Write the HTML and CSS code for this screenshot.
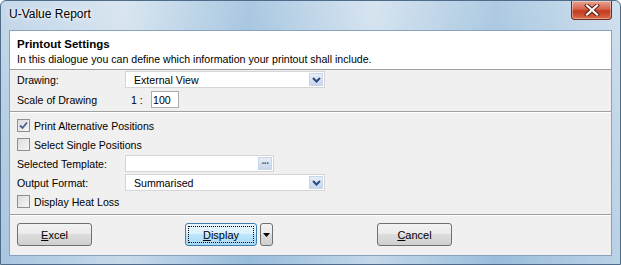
FILE: index.html
```html
<!doctype html><html lang="en">
<head><meta charset="utf-8"/><title>U-Value Report</title>
<meta name="viewport" content="width=device-width, initial-scale=1">
<link rel="stylesheet" href="styles.css">
</head>
<body>

<div class="window">
	<div class="titlebar">
		<span class="title">U-Value Report</span>
		<div class="close">
			<svg width="16" height="12" viewBox="0 0 16 12"><path d="M3 1.5 L13 10.5 M13 1.5 L3 10.5" stroke="#5a1a14" stroke-width="4" stroke-linecap="square"/><path d="M3 1.5 L13 10.5 M13 1.5 L3 10.5" stroke="#fff" stroke-width="2.2" stroke-linecap="square"/></svg>
		</div>
	</div>

	<div class="client">
		<div class="header">
			<div class="h_title">Printout Settings</div>
			<div class="h_sub">In this dialogue you can define which information your printout shall include.</div>
		</div>

		<div class="section top">
			<div class="row">
				<label class="lbl">Drawing:</label>
				<div class="combo"><span>External View</span><span class="drop"><svg width="9" height="6" viewBox="0 0 9 6"><path d="M1 1 L4.5 4.5 L8 1" fill="none" stroke="#2b4a7a" stroke-width="2"/></svg></span></div>
			</div>
			<div class="row">
				<label class="lbl scale">Scale of Drawing</label>
				<span class="ratio">1 :</span>
				<input class="num" type="text" value="100"/>
			</div>
		</div>

		<div class="section mid">
			<label class="chk"><span class="box checked"><svg width="9" height="9" viewBox="0 0 9 9"><path d="M1 4.5 L3.5 7 L8 1.5" fill="none" stroke="#4a5f8c" stroke-width="1.8"/></svg></span>Print Alternative Positions</label>
			<label class="chk"><span class="box"></span>Select Single Positions</label>
			<div class="row">
				<label class="lbl">Selected Template:</label>
				<div class="combo tpl"><span></span><span class="drop dots">&middot;&middot;&middot;</span></div>
			</div>
			<div class="row">
				<label class="lbl">Output Format:</label>
				<div class="combo"><span>Summarised</span><span class="drop"><svg width="9" height="6" viewBox="0 0 9 6"><path d="M1 1 L4.5 4.5 L8 1" fill="none" stroke="#2b4a7a" stroke-width="2"/></svg></span></div>
			</div>
			<label class="chk"><span class="box"></span>Display Heat Loss</label>
		</div>

		<div class="buttons">
			<button class="btn"><u>E</u>xcel</button>
			<div class="split">
				<button class="btn focus"><span><u>D</u>isplay</span></button>
				<button class="btn arrow"><svg width="7" height="4" viewBox="0 0 7 4"><path d="M0 0 H7 L3.5 4 Z" fill="#000"/></svg></button>
			</div>
			<button class="btn cancel"><u>C</u>ancel</button>
		</div>
	</div>
</div>

</body></html>
```

FILE: styles.css
```css
html {user-select: none; -webkit-user-select: none;}
body {
	margin: 0;
	font-family: "Liberation Sans", Arial, sans-serif;
	font-size: 10.6px;
	color: #000;
}

/* 枠（ガラス風） */
.window {
	width: 621px;
	height: 265px;
	box-sizing: border-box;
	padding: 0 8px 8px 8px;
	display: flex;
	flex-direction: column;
	border: 1px solid #4f6c8a;
	border-radius: 6px 6px 0 0;
	background:
		linear-gradient(90deg, rgba(255,255,255,0) 0, rgba(255,255,255,0.35) 20%, rgba(120,170,210,0.35) 40%, rgba(255,255,255,0.3) 60%, rgba(120,170,210,0.3) 80%, rgba(255,255,255,0.2) 100%),
		linear-gradient(180deg, #c6d9ea 0, #b4cde3 50%, #a9c6df 100%);
}
.titlebar {
	height: 29px;
	display: flex;
	align-items: flex-start;
	justify-content: space-between;
}
.title {
	margin-top: 6px;
	font-size: 12px;
	color: #000;
	text-shadow: 0 0 6px #fff, 0 0 3px #fff;
}
.close {
	width: 41px;
	height: 19px;
	box-sizing: border-box;
	border: 1px solid #6b2a22;
	border-top: none;
	border-radius: 0 0 4px 4px;
	display: flex;
	align-items: center;
	justify-content: center;
	background: linear-gradient(180deg, #e8a493 0, #d7634c 45%, #c23a1f 55%, #d86a46 100%);
	box-shadow: inset 0 0 0 1px rgba(255,255,255,0.4);
}

.client {
	flex: 1;
	display: flex;
	flex-direction: column;
	background: #f0f0f0;
	border: 1px solid #8aa3bd;
}

.header {
	background: #fff;
	padding: 6px 7px 0 7px;
	height: 32px;
	border-bottom: 1px solid #a0a0a0;
}
.h_title {
	font-weight: bold;
	font-size: 11.5px;
	line-height: 14px;
}
.h_sub {
	margin-top: 1px;
	line-height: 14px;
}

.section {
	display: flex;
	flex-direction: column;
	padding: 0 7px;
	border-bottom: 1px solid #a0a0a0;
	box-shadow: 0 1px 0 #fff;
}
.section.top {
	padding-top: 1px;
	padding-bottom: 3px;
	gap: 3px;
}
.section.mid {
	padding-top: 5px;
	padding-bottom: 4px;
	gap: 2px;
}

.row {
	display: flex;
	align-items: center;
	height: 17px;
}
.lbl {
	width: 108px;
	flex: none;
}
.lbl.scale {width: 114px;}
.ratio {
	width: 20px;
	flex: none;
}
.num {
	width: 28px;
	height: 17px;
	box-sizing: border-box;
	border: 1px solid #abadb3;
	padding: 0 1px;
	font: inherit;
	background: #fff;
}

.combo {
	width: 200px;
	height: 17px;
	box-sizing: border-box;
	border: 1px solid #d5d5d5;
	background: #fff;
	display: flex;
	align-items: center;
	justify-content: space-between;
	padding-left: 8px;
}
.combo.tpl {width: 149px;}
.drop {
	width: 14px;
	height: 13px;
	margin-right: 1px;
	display: flex;
	align-items: center;
	justify-content: center;
	background: linear-gradient(180deg, #e7eef8 0, #c8d6ec 100%);
	border: 1px solid #c9d5e8;
	box-sizing: border-box;
}
.dots {
	font-size: 10px;
	font-weight: bold;
	color: #3c5a8a;
	line-height: 8px;
	letter-spacing: -1px;
}

.chk {
	display: flex;
	align-items: center;
	height: 17px;
}
.box {
	width: 13px;
	height: 13px;
	box-sizing: border-box;
	border: 1px solid #8e8f8f;
	background: linear-gradient(135deg, #dcdcdc 0, #f6f6f6 100%);
	margin-right: 4px;
	display: flex;
	align-items: center;
	justify-content: center;
}

.buttons {
	flex: 1;
	display: flex;
	align-items: center;
	padding: 0 7px 1px 7px;
}
.btn {
	width: 75px;
	height: 23px;
	box-sizing: border-box;
	border: 1px solid #707070;
	border-radius: 3px;
	background: linear-gradient(180deg, #f2f2f2 0, #ebebeb 49%, #dddddd 50%, #cfcfcf 100%);
	font: inherit;
	font-size: 11px;
	color: #000;
	padding: 0;
}
.split {
	display: flex;
	gap: 3px;
	margin-left: 93px;
}
.btn.focus {
	width: 72px;
	border-color: #3c7fb1;
	background: linear-gradient(180deg, #eaf6fd 0, #d9f0fc 49%, #bee6fd 50%, #a7d9f5 100%);
	padding: 2px;
}
.btn.focus span {
	display: flex;
	align-items: center;
	justify-content: center;
	height: 100%;
	outline: 1px dotted #000;
	outline-offset: -1px;
}
.btn.arrow {
	width: 13px;
	display: flex;
	align-items: center;
	justify-content: center;
}
.btn.cancel {margin-left: 104px;}
```
